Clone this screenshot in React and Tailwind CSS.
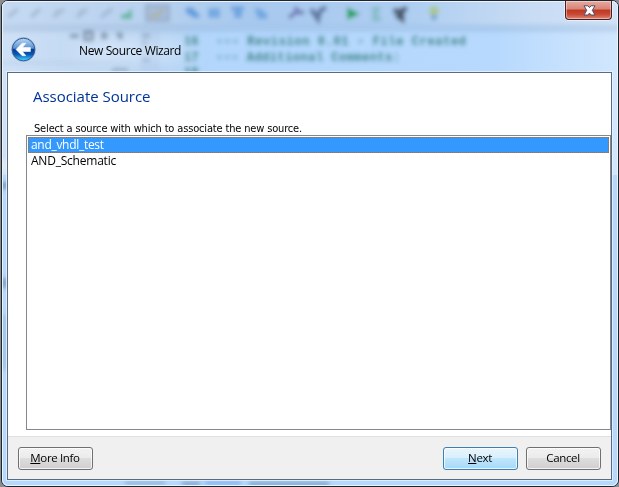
import React from 'react';

const ui = "font-['Open_Sans','Noto_Sans',sans-serif]";

function Backdrop() {
  return (
    <svg className="absolute inset-0" width="616" height="485" viewBox="2 1 616 485" aria-hidden="true">
      <defs>
        <filter id="soft" x="-5%" y="-5%" width="110%" height="110%"><feGaussianBlur stdDeviation="2.300" /></filter>
        <filter id="wide" x="-20%" y="-60%" width="140%" height="220%"><feGaussianBlur stdDeviation="10" /></filter>
        <linearGradient id="bar" x1="0" x2="1">
          <stop offset="0" stopColor="#c6daf2" /><stop offset=".25" stopColor="#b7d1ef" /><stop offset=".4" stopColor="#a8c9ee" />
          <stop offset=".65" stopColor="#adcdf1" /><stop offset=".85" stopColor="#c8dcf4" /><stop offset="1" stopColor="#d3e4f8" />
        </linearGradient>
        <linearGradient id="glass" x1="0" x2="1">
          <stop offset="0" stopColor="#cfe1f6" /><stop offset=".24" stopColor="#b7d3f1" /><stop offset=".34" stopColor="#b2d6fc" />
          <stop offset=".8" stopColor="#b7d9fd" /><stop offset="1" stopColor="#d2e7fe" />
        </linearGradient>
      </defs>
      <rect x="0" y="0" width="619" height="487" fill="#b5d8fc" />
      <rect x="0" y="0" width="619" height="175" fill="url(#glass)" />
      <g filter="url(#soft)">
        <rect x="-6" y="-5" width="632" height="30" fill="url(#bar)" />
        <rect x="-6" y="24" width="632" height="8" fill="#7f9fc4" opacity=".25" />
        <rect x="140" y="32" width="20" height="38" fill="#a2c1e4" opacity=".4" />
        <rect x="0" y="62" width="130" height="2" fill="#a8c0dc" opacity=".5" />
        <g stroke="#7f8fa8" strokeWidth="4" opacity=".4" fill="none">
          <path d="M8 17l10-8M31 17l9-8M53 17l11-8M77 17l10-8M101 17l11-8" />
          <path d="M56 9v8M80 9v8" strokeWidth="2" />
        </g>
        <path d="M121 19v-5l5 0 6-6v11z" fill="#52b394" opacity=".85" />
        <rect x="146" y="5" width="23" height="16" fill="#9eb3cf" stroke="#7f8fa6" strokeWidth="1.500" opacity=".7" />
        <path d="M150 14l5 3 8-8" stroke="#b5ab78" strokeWidth="3" fill="none" opacity=".6" />
        <g fill="#4b8fd8" opacity=".75">
          <path d="M185 8l7-1 7 7 1 4h-6l-8-5z" />
          <path d="M208 8h12v10h-12z" opacity=".75" />
          <path d="M231 6h13v5h-13zM234 11h8v7h-8z" opacity=".8" />
          <path d="M254 8l8 1 6 6-1 4h-9z" opacity=".75" />
        </g>
        <path d="M289 18l8-7M295 7l4 6 5-1" stroke="#6269aa" strokeWidth="4" fill="none" opacity=".8" />
        <path d="M311 9l7 10 2-8 6-4" stroke="#4d648f" strokeWidth="5" fill="none" opacity=".8" />
        <path d="M347 7l13 7-13 6z" fill="#22a267" />
        <path d="M372 9h8M372 14h7M372 19h9" stroke="#58a998" strokeWidth="3" fill="none" opacity=".7" />
        <path d="M393 11l8 0 6-3M396 15l6 4 0-9" stroke="#3f4c60" strokeWidth="5" fill="none" opacity=".9" />
        <ellipse cx="434" cy="11" rx="5" ry="5" fill="#a9c78f" />
        <path d="M434 15v5" stroke="#6b9fd3" strokeWidth="5" />
        <path d="M70 36h9M85 32h7v8h-7zM104 32v8M101 36h7M117 33l5 6M122 33l-3 6" stroke="#53677f" strokeWidth="3" fill="none" opacity=".7" />
        <path d="M142 36h8M142 43h5M142 60h8M112 70h16" stroke="#6780a0" strokeWidth="4" opacity=".5" />
      </g>
      <g filter="url(#soft)" fill="#2d7776" opacity=".85" fontSize="12" fontWeight="bold" className="font-['Liberation_Mono',monospace]">
        <text x="184" y="45">16</text><text x="184" y="61">17</text><text x="184" y="76">18</text>
        <text x="216" y="45" textLength="250">--- Revision 0.01 - File Created</text>
        <text x="216" y="61" textLength="184">--- Additional Comments:</text>
      </g>
      <ellipse cx="130" cy="51" rx="58" ry="11" fill="#edf5ff" opacity=".55" filter="url(#wide)" />
      <g filter="url(#soft)" fill="#6f90b8">
        <rect x="-1" y="160" width="9" height="12" fill="#dfe8f4" />
        <rect x="0" y="182" width="8" height="7" opacity=".8" /><rect x="0" y="278" width="8" height="10" opacity=".7" />
        <rect x="0" y="315" width="8" height="55" opacity=".25" />
        <rect x="125" y="481" width="40" height="4" opacity=".5" />
        <rect x="182" y="482" width="18" height="4" opacity=".8" />
        <rect x="205" y="481" width="36" height="4" fill="#79a5f2" opacity=".8" />
        <rect x="249" y="482" width="80" height="4" opacity=".8" />
      </g>
    </svg>
  );
}

function BackButton() {
  return (
    <button aria-label="Back" className="block h-[26px] w-[26px]">
      <svg width="26" height="26" viewBox="0 0 26 26">
        <defs>
          <linearGradient id="orb" x1="0" y1="0" x2="0" y2="1">
            <stop offset="0" stopColor="#b9d6f3" /><stop offset=".44" stopColor="#5a94d4" /><stop offset=".5" stopColor="#063b91" />
            <stop offset=".72" stopColor="#0a58ba" /><stop offset="1" stopColor="#48dcff" />
          </linearGradient>
        </defs>
        <circle cx="12.500" cy="12.500" r="12" fill="#cfe1f5" stroke="#8fa6c4" strokeWidth=".7" />
        <circle cx="12.500" cy="12.500" r="11.300" fill="url(#orb)" stroke="#2c5a98" strokeWidth="1" />
        <path d="M5 12.500l6.200-6.200h3.600L11.400 10.600H19.400v3.900h-8l3.400 4.200h-3.600z" fill="#fff" stroke="#fff" strokeWidth=".6" strokeLinejoin="round" />
      </svg>
    </button>
  );
}

function Button({ children, primary }) {
  const look = primary
    ? 'border-[#3c7fb1] bg-[linear-gradient(#e8f5fc,#d8effc_48%,#bee6fd_50%,#a7d9f5)]'
    : 'border-[#707070] bg-[linear-gradient(#f2f2f2,#ebebeb_48%,#dddddd_50%,#cfcfcf)]';
  return (
    <button className={`${ui} flex h-[23px] w-[75px] items-center justify-center rounded-[3px] border pr-px text-[11.5px] leading-none tracking-[-0.35px] text-black shadow-[inset_0_0_0_1px_rgba(255,255,255,0.75)] ${look}`}>
      <span>{children}</span>
    </button>
  );
}

export default function App() {
  return (
    <div className="h-[487px] w-[619px] overflow-hidden bg-[#8c8c8c] pl-px">
      <div className="relative h-[487px] w-[618px] overflow-hidden rounded-[7px] border border-[#20242e] bg-[#b5d8fc]">
        <Backdrop />
        <div className="pointer-events-none absolute inset-0 rounded-[6px] border border-[#e8f4ff]" />
        <div className="relative flex h-full flex-col pb-[6px] pl-[5px] pr-[6px]">
          <header className="flex h-[71px] shrink-0 justify-between">
            <div className="flex items-start pl-[4px] pt-[36px]">
              <BackButton />
              <h1 className={`${ui} ml-[42px] mt-[5px] whitespace-nowrap text-[12px] leading-[18px] tracking-[-0.38px] text-black`}>New Source Wizard</h1>
            </div>
            <button aria-label="Close" className="flex h-[19px] w-[47px] items-center justify-center rounded-b-[4px] border border-t-0 border-[#461e24] bg-[linear-gradient(#e6aaa0,#d98476_45%,#bd3823_50%,#c94a35_75%,#dc8876)] shadow-[inset_0_0_0_1px_rgba(255,255,255,0.4),0_0_0_1px_rgba(255,255,255,0.5)]">
              <svg className="ml-[2px]" width="13" height="11" viewBox="0 0 13 11">
                <path d="M1 .8h3.900l1.600 1.800 1.600-1.800H12L9.300 5.300 12 10H8.100l-1.600-1.900L4.900 10H1l2.700-4.700z" fill="#fff" stroke="#4c5068" strokeWidth="1" />
              </svg>
            </button>
          </header>
          <main className="flex min-h-0 flex-1 flex-col border border-[#5a6b80] bg-white shadow-[0_0_0_1px_rgba(235,246,255,0.75)]">
            <h2 className={`${ui} ml-[25px] mt-[13px] whitespace-nowrap text-[15px] leading-[20px] tracking-[-0.03px] text-[#003399]`}>Associate Source</h2>
            <p className="ml-[26px] mt-[16px] whitespace-nowrap font-['DejaVu_Sans_Condensed','DejaVu_Sans',sans-serif] text-[11px] leading-[13px] tracking-[-0.16px] text-black">Select a source with which to associate the new source.</p>
            <ul className={`${ui} ml-[18px] h-[295px] border border-[#828790] p-px text-[12px] leading-[16px] tracking-[-0.3px] text-black`}>
              <li className="h-[16px] border border-dotted border-[#cc6600] bg-[#3399ff] pl-[2px] leading-[14px] text-white">and_vhdl_test</li>
              <li className="h-[16px] pl-[3px] tracking-[-0.22px]">AND_Schematic</li>
            </ul>
            <footer className="mt-auto flex h-[43px] items-center gap-2 border-t border-[#dfdfdf] bg-[#f0f0f0] pl-[10px] pr-[10px]">
              <Button><u>M</u>ore Info</Button>
              <div className="flex-1" />
              <Button primary><u>N</u>ext</Button>
              <Button>Cancel</Button>
            </footer>
          </main>
        </div>
      </div>
    </div>
  );
}
